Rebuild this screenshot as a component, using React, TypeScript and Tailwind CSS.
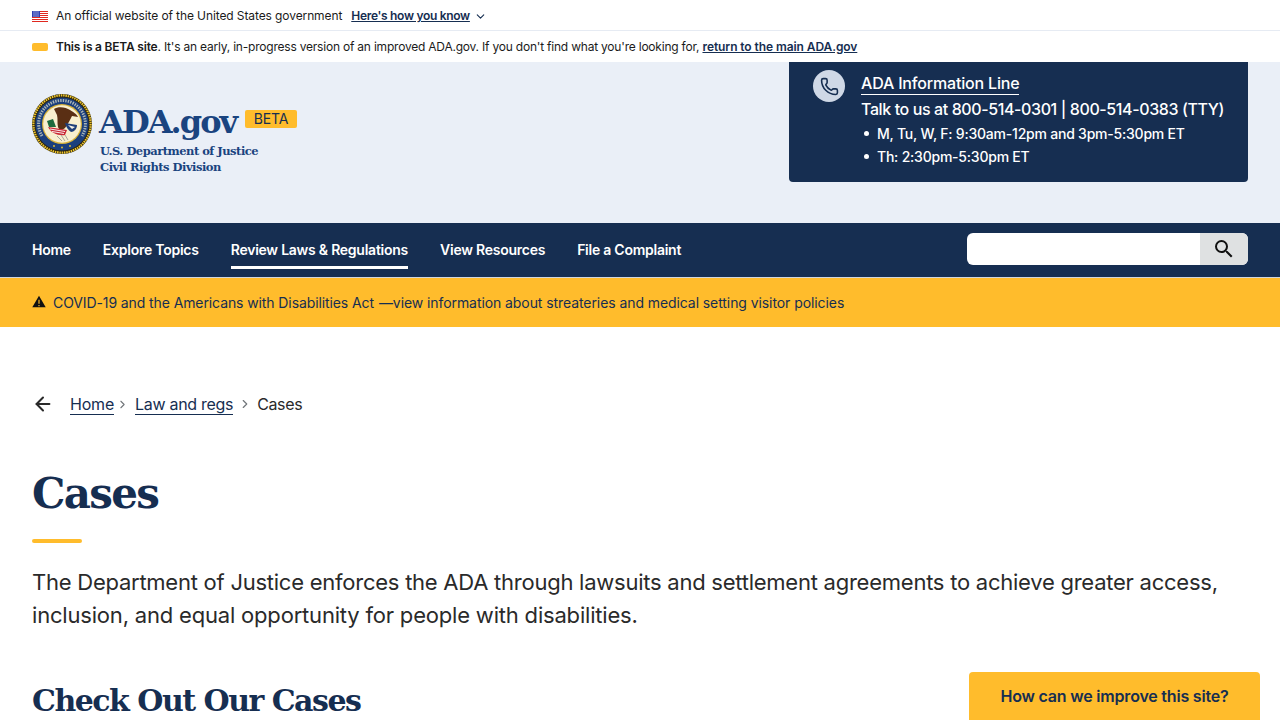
import { ChevronDown, ChevronRight, ArrowLeft, Phone } from "lucide-react";

const navItems = ["Home", "Explore Topics", "Review Laws & Regulations", "View Resources", "File a Complaint"];

function Flag() {
  return (
    <svg width="16" height="11" viewBox="0 0 16 11" className="shrink-0">
      <rect width="16" height="11" fill="#fff" />
      {[0, 2, 4, 6, 8, 10].map((y) => (
        <rect key={y} y={y} width="16" height="1" fill="#e0281f" />
      ))}
      <rect width="8" height="6" fill="#2e3fb0" />
      {[1, 3, 5].map((x) =>
        [1, 3, 5].map((y) => <rect key={`${x}-${y}`} x={x + 0.5} y={y - 0.5} width="1" height="1" fill="#eef0fb" />),
      )}
    </svg>
  );
}

function Seal() {
  return (
    <svg width="60" height="60" viewBox="0 0 60 60" className="shrink-0">
      <circle cx="30" cy="30" r="30" fill="#2a2410" />
      <circle cx="30" cy="30" r="28.6" fill="none" stroke="#f0c62c" strokeWidth="2.2" strokeDasharray="1.5 0.8" />
      <circle cx="30" cy="30" r="26.6" fill="#1b3f7d" />
      <path d="M10 42 A 23.4 23.4 0 1 1 50 42" fill="none" stroke="#cfd3c4" strokeWidth="3" strokeDasharray="1.4 1.1" opacity="0.8" />
      <circle cx="30" cy="30" r="20" fill="#d8b23a" />
      <circle cx="30" cy="30" r="18.8" fill="#f8efcf" />
      <path d="M22 15 C26 12 34 13 38 16 C41 18 45 20 46 23 L40 22 C38 26 36 30 33 34 C30 37 27 36 26 33 C25 29 26 25 25 21 C24 19 23 17 22 15Z" fill="#5a2f14" />
      <path d="M33 29 L45 31 C45 35 42 38 39 38 C36 36 34 33 33 29Z" fill="#1f3f7a" />
      <path d="M36 31 L43 33 L40 35Z" fill="#f3f0e6" />
      <path d="M15 27 L21 25 L24 33 L17 33Z" fill="#1e6a3c" />
      <path d="M16 33 L35 36 L33 41 C26 42 19 39 16 33Z" fill="#c92a35" />
      <path d="M18 35 L33 37.5 M20 37.5 L32 39.5" stroke="#fff" strokeWidth="0.9" />
      <path d="M25 42 L30 47 M29 41 L33 47 M33 41 L36 46" stroke="#a5a59c" strokeWidth="1" />
      <circle cx="22" cy="52" r="0.9" fill="#f0c62c" />
      <circle cx="30" cy="53.5" r="0.9" fill="#f0c62c" />
      <circle cx="38" cy="52" r="0.9" fill="#f0c62c" />
    </svg>
  );
}

export default function App() {
  return (
    <div className="h-[720px] overflow-hidden bg-white font-['Inter','Liberation_Sans',sans-serif] text-[#1b1b1b] relative">
      <div className="flex h-[31px] items-center gap-2 border-b border-[#e6ebf3] px-8 pt-[2px] text-[12px] tracking-[-0.1px]">
        <Flag />
        <span>An official website of the United States government</span>
        <a className="ml-px flex items-center gap-[4px] font-semibold text-[#162e51] underline tracking-[-0.3px]">
          Here's how you know
          <ChevronDown size={13} strokeWidth={2} />
        </a>
      </div>

      <div className="flex h-[31px] items-center gap-2 px-8 text-[12px] tracking-[-0.21px]">
        <span className="h-[8px] w-[16px] shrink-0 rounded-[2px] bg-[#ffbc2c]" />
        <span>
          <b className="font-semibold">This is a BETA site</b>. It's an early, in-progress version of an improved ADA.gov. If you don't find what you're looking for,{" "}
          <a className="font-semibold text-[#162e51] underline tracking-[-0.08px]">return to the main ADA.gov</a>
        </span>
      </div>

      <header className="flex h-[161px] justify-between bg-[#eaeff7] pl-8 pr-8">
        <div className="flex items-start gap-[7px] pt-8">
          <Seal />
          <div className="pt-[3px]">
            <div className="flex items-start gap-[9px]">
              <span className="font-['DejaVu_Serif',serif] text-[32px] leading-[50px] font-bold tracking-[-1.95px] text-[#1a4480]">ADA.gov</span>
              <span className="mt-[13px] rounded-[2px] bg-[#ffbc2c] px-[8.5px] text-[14px] leading-[18px] tracking-[-0.1px] text-[#162e51]">BETA</span>
            </div>
            <div className="-mt-[4px] pl-px font-['DejaVu_Serif',serif] text-[11.5px] leading-[16px] font-bold tracking-[-0.5px] text-[#1a4480]">
              <div>U.S. Department of Justice</div>
              <div>Civil Rights Division</div>
            </div>
          </div>
        </div>

        <div className="flex h-[120px] w-[459px] gap-4 rounded-b bg-[#162e51] pl-6 pt-2 text-white">
          <div className="flex h-8 w-8 shrink-0 items-center justify-center rounded-full bg-[#cfd8e6]">
            <Phone size={19} strokeWidth={2} className="text-[#162e51]" />
          </div>
          <div>
            <a className="mt-[3px] block w-fit border-b border-white text-[16px] leading-[21px] font-medium tracking-[-0.18px]">ADA Information Line</a>
            <div className="mt-[2px] text-[16px] leading-[24px] font-medium tracking-[-0.39px]">Talk to us at 800-514-0301 | 800-514-0383 (TTY)</div>
            <ul className="mt-[1px] pl-[3px] text-[14px] font-medium tracking-[-0.22px]">
              <li className="flex h-[23px] items-center gap-[8px]"><span className="h-[5px] w-[5px] rounded-full bg-white" />M, Tu, W, F: 9:30am-12pm and 3pm-5:30pm ET</li>
              <li className="flex h-[23px] items-center gap-[8px]"><span className="h-[5px] w-[5px] rounded-full bg-white" />Th: 2:30pm-5:30pm ET</li>
            </ul>
          </div>
        </div>
      </header>

      <nav className="flex h-[55px] items-center justify-between border-b border-[#d0d5dc] bg-[#162e51] px-8 pb-[2px] text-white">
        <div className="flex h-full gap-8 self-start">
          {navItems.map((item) => (
            <a
              key={item}
              className={`flex h-[46px] items-center pt-[9px] text-[14px] font-semibold tracking-[-0.25px] border-b-[3px] ${
                item.startsWith("Review") ? "border-white" : "border-transparent"
              }`}
            >
              {item}
            </a>
          ))}
        </div>
        <div className="flex h-8 w-[281px] overflow-hidden rounded-md bg-white">
          <div className="flex-1" />
          <div className="flex w-[48px] items-center justify-center bg-[#dfe1e2]">
            <svg width="24" height="24" viewBox="0 0 24 24" fill="#111">
              <path d="M15.5 14h-.79l-.28-.27A6.471 6.471 0 0 0 16 9.5 6.5 6.5 0 1 0 9.5 16c1.61 0 3.09-.59 4.23-1.57l.27.28v.79l5 4.99L20.49 19l-4.99-5zm-6 0C7.01 14 5 11.99 5 9.5S7.01 5 9.5 5 14 7.01 14 9.5 11.99 14 9.5 14z" />
            </svg>
          </div>
        </div>
      </nav>

      <div className="flex h-[49px] items-center gap-[7px] bg-[#ffbc2c] px-8 text-[14px] tracking-[-0.1px] text-[#162e51]">
        <svg width="14" height="13" viewBox="0 0 24 22" className="mb-[3px] shrink-0">
          <path d="M12 1 L23.5 21 H0.5Z M11 8 V15 H13 V8Z M11 17 V19 H13 V17Z" fillRule="evenodd" fill="#111" />
        </svg>
        <span>COVID-19 and the Americans with Disabilities Act</span>
        <span className="-ml-[2px] tracking-[-0.08px]">—view information about streateries and medical setting visitor policies</span>
      </div>

      <main className="px-8 pt-[65px]">
        <div className="flex h-6 items-center text-[16px] tracking-[-0.2px] text-[#2a2a2a]">
          <ArrowLeft size={22} strokeWidth={2.2} className="mr-[16px]" />
          <a className="border-b border-[#162e51] leading-[20px] text-[#162e51]">Home</a>
          <ChevronRight size={13} className="mx-[2px] text-[#71767a]" />
          <a className="ml-[4px] border-b border-[#162e51] leading-[20px] tracking-[-0.3px] text-[#162e51]">Law and regs</a>
          <ChevronRight size={14} className="mx-[5px] text-[#71767a]" />
          <span className="tracking-[-0.35px]">Cases</span>
        </div>

        <h1 className="mt-[49px] font-['DejaVu_Serif',serif] text-[42px] leading-[58px] font-bold tracking-[-1.7px] text-[#162e51]">Cases</h1>
        <div className="mt-[16px] h-1 w-[50px] rounded-sm bg-[#ffbc2c]" />
        <p className="mt-[23px] text-[22px] leading-[33px] tracking-[-0.245px] text-[#2a2a2a]">
          The Department of Justice enforces the ADA through lawsuits and settlement agreements to achieve greater access,
          <br />
          <span className="tracking-[-0.19px]">inclusion, and equal opportunity for people with disabilities.</span>
        </p>
        <h2 className="mt-[49px] font-['DejaVu_Serif',serif] text-[30px] leading-[40px] font-bold tracking-[-1.5px] text-[#162e51]">Check Out Our Cases</h2>
      </main>

      <a className="absolute right-5 bottom-0 flex h-[48px] w-[291px] items-center justify-center rounded-t bg-[#ffbc2c] text-[16px] font-semibold tracking-[-0.2px] text-[#162e51]">
        How can we improve this site?
      </a>
    </div>
  );
}
